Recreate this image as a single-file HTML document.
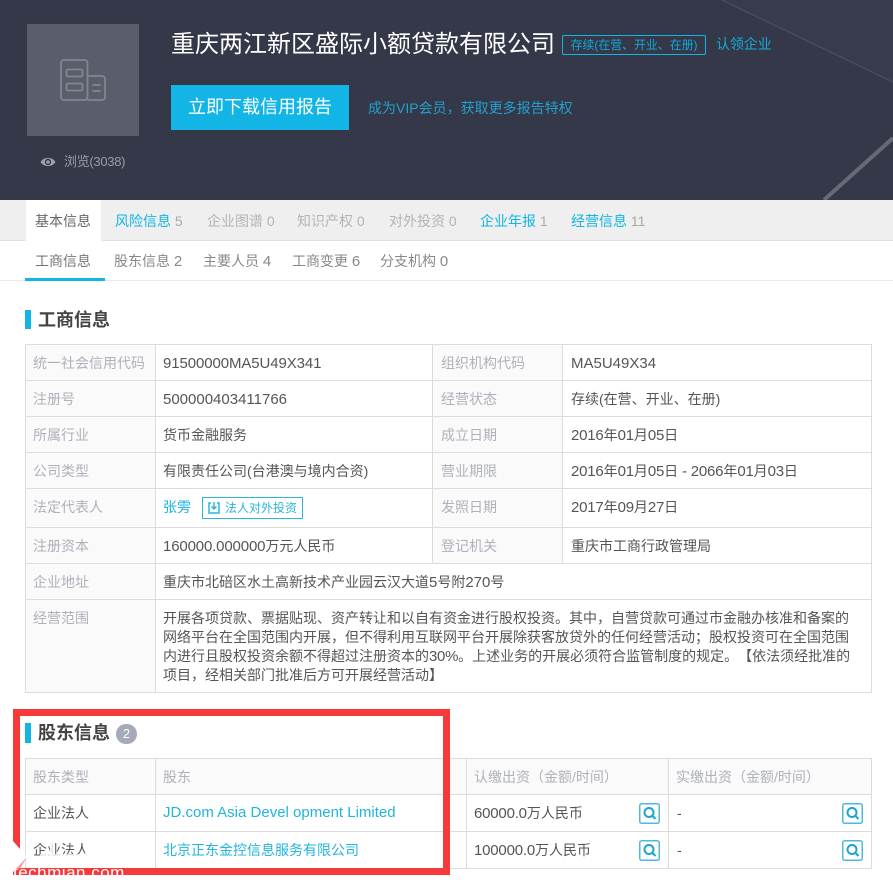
<!DOCTYPE html>
<html lang="zh"><head><meta charset="utf-8"><title>重庆两江新区盛际小额贷款有限公司</title>
<style>
*{box-sizing:border-box;margin:0;padding:0}
html,body{width:893px;height:890px;overflow:hidden;background:#fff}
body{position:relative;font-family:"Liberation Sans","Noto Sans CJK SC",sans-serif;font-size:14px;color:#555;text-spacing-trim:space-all}
i{font-style:normal;font-size:15px}
.d i{letter-spacing:-.2px}
.a{position:absolute;white-space:nowrap;line-height:20px}
.hdr{position:absolute;left:0;top:0;width:893px;height:200px;background:#343849}
.bl{color:#12b5e3}.hb{color:#2aa6cf}.lb{color:#aeb1bb}.tb{color:#aeb1bb}.g{color:#a9a9a9;font-size:14px}
.ln{position:absolute;background:#dcdcdc}
.cell{position:absolute;background:#fafafa}
</style></head><body>
<div class="hdr">
<svg width="893" height="200" style="position:absolute;left:0;top:0"><polygon points="720,0 893,82 893,0" fill="#373b4c"/><line x1="722" y1="0" x2="893" y2="82" stroke="#474b5b" stroke-width="1.500"/><line x1="824" y1="200" x2="893" y2="138" stroke="#666a78" stroke-width="4"/></svg>
<div style="position:absolute;left:27px;top:24px;width:112px;height:112px;background:#5a5d6b"></div>
<svg width="52" height="50" style="position:absolute;left:57px;top:56px" fill="none" stroke="#83858f" stroke-width="1.800"><rect x="4" y="4" width="26.500" height="40" rx="3"/><path d="M30.500 20H45a3 3 0 0 1 3 3V41a3 3 0 0 1-3 3H30.500"/><rect x="9.500" y="13.500" width="16" height="7" rx="1.500"/><rect x="9.500" y="27.500" width="16" height="7" rx="1.500"/><path d="M35.500 29h8M35.500 35h8"/></svg>
<svg width="16" height="12" style="position:absolute;left:40px;top:156px"><path d="M.5 6C4 .5 12 .5 15.500 6C12 11.500 4 11.500 .5 6Z" fill="#a0a2ab"/><circle cx="8" cy="6" r="3.200" fill="#343849"/><circle cx="8" cy="6" r="1.800" fill="#a0a2ab"/></svg>
<div class="a" style="left:64px;top:152px;font-size:13px;color:#9a9ca6;letter-spacing:-.3px">浏览(3038)</div>
<div class="a" style="left:171px;top:29px;font-size:24px;line-height:32px;color:#fff">重庆两江新区盛际小额贷款有限公司</div>
<div class="a" style="left:562px;top:35px;width:144px;height:20px;border:1px solid #12b5e3;border-radius:2px;font-size:12px;line-height:18px;color:#12a8d8;text-align:center;letter-spacing:-.1px">存续(在营、开业、在册)</div>
<div class="a" style="left:716px;top:34px;font-size:14px;color:#19a9d8;letter-spacing:-.1px">认领企业</div>
<div style="position:absolute;left:171px;top:85px;width:178px;height:45px;background:#12b5e6;color:#fff;font-size:18px;line-height:45px;text-align:center">立即下载信用报告</div>
<div class="a" style="left:368px;top:98px;color:#24a0cc">成为VIP会员，获取更多报告特权</div>
</div>

<div style="position:absolute;left:0;top:200px;width:893px;height:41px;background:#efefef;border-bottom:1px solid #e2e2e2"></div>
<div style="position:absolute;left:25px;top:200px;width:77px;height:41px;background:#fff;border:1px solid #eee;border-bottom:0;border-top:0"></div>
<div class="a" style="left:35px;top:211px;color:#666">基本信息</div>
<div class="a" style="left:115px;top:211px"><span class="bl">风险信息</span> <span class="g">5</span></div>
<div class="a" style="left:207px;top:211px;color:#b4b4b4">企业图谱 <span class="g" style="color:#b4b4b4">0</span></div>
<div class="a" style="left:297px;top:211px;color:#b4b4b4">知识产权 <span class="g" style="color:#b4b4b4">0</span></div>
<div class="a" style="left:389px;top:211px;color:#b4b4b4">对外投资 <span class="g" style="color:#b4b4b4">0</span></div>
<div class="a" style="left:480px;top:211px"><span class="bl">企业年报</span> <span class="g">1</span></div>
<div class="a" style="left:571px;top:211px"><span class="bl">经营信息</span> <span class="g">11</span></div>

<div class="a" style="left:35px;top:251px;color:#777">工商信息</div>
<div class="a" style="left:114px;top:251px;color:#888">股东信息 <i>2</i></div>
<div class="a" style="left:203px;top:251px;color:#888">主要人员 <i>4</i></div>
<div class="a" style="left:292px;top:251px;color:#888">工商变更 <i>6</i></div>
<div class="a" style="left:380px;top:251px;color:#888">分支机构 <i>0</i></div>
<div class="ln" style="left:0;top:280px;width:893px;height:1px;background:#e9e9e9"></div>
<div style="position:absolute;left:25px;top:278px;width:80px;height:3px;background:#12b5e3"></div>

<div style="position:absolute;left:25px;top:310px;width:6px;height:19px;background:#12b5e3"></div>
<div class="a" style="left:38px;top:308px;font-size:18px;line-height:24px;font-weight:bold;color:#444">工商信息</div>

<!-- table 1 -->
<div class="cell" style="left:25px;top:344px;width:130px;height:348px"></div>
<div class="cell" style="left:432px;top:344px;width:130px;height:219px"></div>
<div class="ln" style="left:25px;top:344px;width:847px;height:1px"></div>
<div class="ln" style="left:25px;top:380px;width:847px;height:1px"></div>
<div class="ln" style="left:25px;top:416px;width:847px;height:1px"></div>
<div class="ln" style="left:25px;top:452px;width:847px;height:1px"></div>
<div class="ln" style="left:25px;top:488px;width:847px;height:1px"></div>
<div class="ln" style="left:25px;top:527px;width:847px;height:1px"></div>
<div class="ln" style="left:25px;top:563px;width:847px;height:1px"></div>
<div class="ln" style="left:25px;top:599px;width:847px;height:1px"></div>
<div class="ln" style="left:25px;top:692px;width:847px;height:1px"></div>
<div class="ln" style="left:25px;top:344px;width:1px;height:349px"></div>
<div class="ln" style="left:155px;top:344px;width:1px;height:349px"></div>
<div class="ln" style="left:432px;top:344px;width:1px;height:219px"></div>
<div class="ln" style="left:562px;top:344px;width:1px;height:219px"></div>
<div class="ln" style="left:871px;top:344px;width:1px;height:349px"></div>

<div class="a lb" style="left:33px;top:353px">统一社会信用代码</div>
<div class="a lb" style="left:33px;top:389px">注册号</div>
<div class="a lb" style="left:33px;top:425px">所属行业</div>
<div class="a lb" style="left:33px;top:461px">公司类型</div>
<div class="a lb" style="left:33px;top:497px">法定代表人</div>
<div class="a lb" style="left:33px;top:536px">注册资本</div>
<div class="a lb" style="left:33px;top:572px">企业地址</div>
<div class="a lb" style="left:33px;top:608px">经营范围</div>

<div class="a" style="left:163px;top:353px"><i style="letter-spacing:-.1px">91500000MA5U49X341</i></div>
<div class="a" style="left:163px;top:389px"><i>500000403411766</i></div>
<div class="a" style="left:163px;top:425px">货币金融服务</div>
<div class="a" style="left:163px;top:461px">有限责任公司(台港澳与境内合资)</div>
<div class="a bl" style="left:163px;top:497px">张雱</div>
<div style="position:absolute;left:202px;top:497px;width:101px;height:22px;border:1px solid #2db5d8"></div>
<svg width="14" height="14" style="position:absolute;left:207px;top:501px" fill="none" stroke="#2db5d8" stroke-width="1.500"><path d="M4 2H2v10h10V2h-2M7 1v7M4.500 5.500L7 8l2.500-2.500"/></svg>
<div class="a" style="left:225px;top:498px;font-size:12px;color:#2db5d8">法人对外投资</div>
<div class="a" style="left:163px;top:536px"><i style="letter-spacing:-.15px">160000.000000</i>万元人民币</div>
<div class="a" style="left:163px;top:572px">重庆市北碚区水土高新技术产业园云汉大道<i>5</i>号附<i>270</i>号</div>
<div class="a" style="left:163px;top:608px">开展各项贷款、票据贴现、资产转让和以自有资金进行股权投资。其中，自营贷款可通过市金融办核准和备案的</div>
<div class="a" style="left:163px;top:627px">网络平台在全国范围内开展，但不得利用互联网平台开展除获客放贷外的任何经营活动；股权投资可在全国范围</div>
<div class="a" style="left:163px;top:646px">内进行且股权投资余额不得超过注册资本的<i style="letter-spacing:-.3px">30%</i>。上述业务的开展必须符合监管制度的规定。【依法须经批准的</div>
<div class="a" style="left:163px;top:665px">项目，经相关部门批准后方可开展经营活动】</div>

<div class="a lb" style="left:441px;top:353px">组织机构代码</div>
<div class="a lb" style="left:441px;top:389px">经营状态</div>
<div class="a lb" style="left:441px;top:425px">成立日期</div>
<div class="a lb" style="left:441px;top:461px">营业期限</div>
<div class="a lb" style="left:441px;top:497px">发照日期</div>
<div class="a lb" style="left:441px;top:536px">登记机关</div>
<div class="a" style="left:571px;top:353px"><i>MA5U49X34</i></div>
<div class="a" style="left:571px;top:389px">存续(在营、开业、在册)</div>
<div class="a d" style="left:571px;top:425px"><i>2016</i>年<i>01</i>月<i>05</i>日</div>
<div class="a d" style="left:571px;top:461px"><i>2016</i>年<i>01</i>月<i>05</i>日 <i>-</i> <i>2066</i>年<i>01</i>月<i>03</i>日</div>
<div class="a d" style="left:571px;top:497px"><i>2017</i>年<i>09</i>月<i>27</i>日</div>
<div class="a" style="left:571px;top:536px">重庆市工商行政管理局</div>

<div style="position:absolute;left:25px;top:723px;width:6px;height:20px;background:#12b5e3"></div>
<div class="a" style="left:38px;top:721px;font-size:18px;line-height:24px;font-weight:bold;color:#444">股东信息</div>
<div style="position:absolute;left:116px;top:724px;width:21px;height:20px;border-radius:10px;background:#a5a9b8;color:#fff;font-size:13px;line-height:20px;text-align:center">2</div>

<!-- table 2 -->
<div class="cell" style="left:25px;top:759px;width:846px;height:35px"></div>
<div class="ln" style="left:25px;top:758px;width:847px;height:1px"></div>
<div class="ln" style="left:25px;top:794px;width:847px;height:1px"></div>
<div class="ln" style="left:25px;top:831px;width:847px;height:1px"></div>
<div class="ln" style="left:25px;top:868px;width:847px;height:1px"></div>
<div class="ln" style="left:25px;top:758px;width:1px;height:111px"></div>
<div class="ln" style="left:155px;top:758px;width:1px;height:111px"></div>
<div class="ln" style="left:466px;top:758px;width:1px;height:111px"></div>
<div class="ln" style="left:668px;top:758px;width:1px;height:111px"></div>
<div class="ln" style="left:871px;top:758px;width:1px;height:111px"></div>

<div class="a tb" style="left:33px;top:767px">股东类型</div>
<div class="a tb" style="left:163px;top:767px">股东</div>
<div class="a tb" style="left:474px;top:767px">认缴出资（金额/时间）</div>
<div class="a tb" style="left:676px;top:767px">实缴出资（金额/时间）</div>
<div class="a" style="left:33px;top:803px">企业法人</div>
<div class="a" style="left:33px;top:840px">企业法人</div>
<div class="a" style="left:163px;top:803px;font-size:15px;color:#21b4dc">JD.com Asia Devel opment Limited</div>
<div class="a" style="left:163px;top:840px;color:#21b4dc">北京正东金控信息服务有限公司</div>
<div class="a d" style="left:474px;top:803px"><i>60000.0</i>万人民币</div>
<div class="a d" style="left:474px;top:840px"><i>100000.0</i>万人民币</div>
<div class="a" style="left:677px;top:803px">-</div>
<div class="a" style="left:677px;top:840px">-</div>

<svg width="21" height="21" style="position:absolute;left:639px;top:803px" fill="none"><rect x=".75" y=".75" width="19.500" height="19.500" rx="2" stroke="#4fb9db" stroke-width="1.500" fill="#fff"/><circle cx="10" cy="9.500" r="4.500" stroke="#1fa3cf" stroke-width="2"/><path d="M13.500 13l3 3" stroke="#1fa3cf" stroke-width="2"/></svg>
<svg width="21" height="21" style="position:absolute;left:842px;top:803px" fill="none"><rect x=".75" y=".75" width="19.500" height="19.500" rx="2" stroke="#4fb9db" stroke-width="1.500" fill="#fff"/><circle cx="10" cy="9.500" r="4.500" stroke="#1fa3cf" stroke-width="2"/><path d="M13.500 13l3 3" stroke="#1fa3cf" stroke-width="2"/></svg>
<svg width="21" height="21" style="position:absolute;left:639px;top:840px" fill="none"><rect x=".75" y=".75" width="19.500" height="19.500" rx="2" stroke="#4fb9db" stroke-width="1.500" fill="#fff"/><circle cx="10" cy="9.500" r="4.500" stroke="#1fa3cf" stroke-width="2"/><path d="M13.500 13l3 3" stroke="#1fa3cf" stroke-width="2"/></svg>
<svg width="21" height="21" style="position:absolute;left:842px;top:840px" fill="none"><rect x=".75" y=".75" width="19.500" height="19.500" rx="2" stroke="#4fb9db" stroke-width="1.500" fill="#fff"/><circle cx="10" cy="9.500" r="4.500" stroke="#1fa3cf" stroke-width="2"/><path d="M13.500 13l3 3" stroke="#1fa3cf" stroke-width="2"/></svg>

<!-- red annotation box -->
<div style="position:absolute;left:13px;top:709px;width:437px;height:166px;border:7px solid #f63a3a"></div>

<!-- watermark -->
<svg width="60" height="50" style="position:absolute;left:0;top:830px"><polygon points="13,11 27,27 13,42" fill="#fff"/><polygon points="13,42 27,27 20,39 20,38" fill="#f8a0a0"/></svg>
<div class="a" style="left:13px;top:861px;width:120px;height:14px;overflow:hidden;font-size:17px;line-height:23px;color:#fff;letter-spacing:.5px">techmian.com</div>
<div style="position:absolute;left:0;top:875px;width:140px;height:8px;background:#fff"></div>
<div style="position:absolute;left:40px;top:854px;width:50px;height:7px;background:rgba(255,255,255,.75)"></div>
<div style="position:absolute;left:50px;top:840px;width:3px;height:20px;background:rgba(255,255,255,.8)"></div>
<div style="position:absolute;left:85px;top:846px;width:8px;height:14px;background:rgba(255,255,255,.75)"></div>
</body></html>
